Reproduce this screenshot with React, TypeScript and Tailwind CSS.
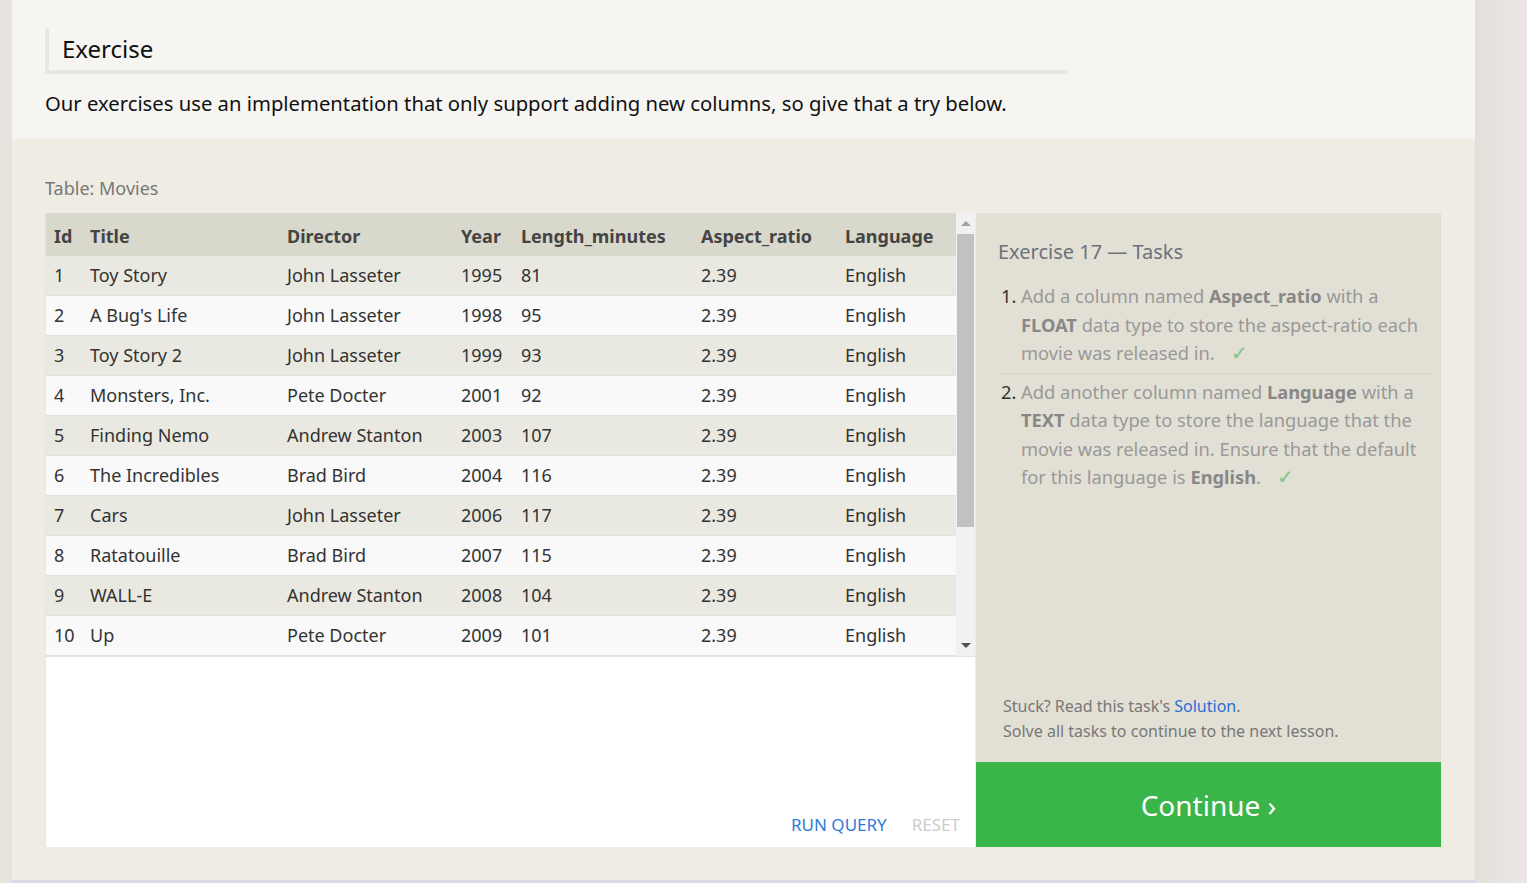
import React from "react"

const movies = [
  [1, "Toy Story", "John Lasseter", 1995, 81],
  [2, "A Bug's Life", "John Lasseter", 1998, 95],
  [3, "Toy Story 2", "John Lasseter", 1999, 93],
  [4, "Monsters, Inc.", "Pete Docter", 2001, 92],
  [5, "Finding Nemo", "Andrew Stanton", 2003, 107],
  [6, "The Incredibles", "Brad Bird", 2004, 116],
  [7, "Cars", "John Lasseter", 2006, 117],
  [8, "Ratatouille", "Brad Bird", 2007, 115],
  [9, "WALL-E", "Andrew Stanton", 2008, 104],
  [10, "Up", "Pete Docter", 2009, 101],
]

const cols = "grid grid-cols-[36px_197px_174px_60px_180px_144px_119px]"
const headers = ["Id", "Title", "Director", "Year", "Length_minutes", "Aspect_ratio", "Language"]

function Check() {
  return <span className="ml-4 text-[20px] text-[#7cc68a]">✓</span>
}

export default function App() {
  return (
    <div
      className="flex w-full h-[883px] bg-[#e6e2de] overflow-hidden"
      style={{ fontFamily: '"Noto Sans", "Open Sans", sans-serif' }}
    >
      <div className="w-[12px] shrink-0" />
      <div className="w-[1463px] shrink-0 flex flex-col">
        {/* lesson text */}
        <div className="h-[139px] bg-[#f6f5f1] px-[33px] pt-[28px]">
          <div className="w-[1022px] h-[46px] border-l-4 border-b-4 border-[#e8e8de] pl-[13px] flex items-center text-[24px] text-[#111]">
            Exercise
          </div>
          <p className="mt-[14px] text-[20.25px] text-[#111]">
            Our exercises use an implementation that only support adding new columns, so give that a try below.
          </p>
        </div>

        {/* exercise widget */}
        <div className="flex-1 bg-[#efece4] px-[33px] pt-[36px]">
          <div className="text-[18px] text-[#777] leading-[26px]">Table: Movies</div>
          <div className="mt-[12px] flex h-[634px]">
            <div className="w-[930px] flex flex-col bg-white border-l border-[#e6e4dc]">
              <div className="flex h-[444px] border-b border-[#e6e4dc]">
                <div className="w-[910px] text-[18px] text-[#333]">
                  <div className={`${cols} h-[43px] pt-[3px] items-center bg-[#d9d8cc] font-bold text-[#444]`}>
                    {headers.map((h) => (
                      <div key={h} className="pl-[8px]">{h}</div>
                    ))}
                  </div>
                  {movies.map((m, i) => (
                    <div
                      key={m[0]}
                      className={`${cols} h-[40px] items-center border-b border-[#e2e1da] ${
                        i % 2 === 0 ? "bg-[#eae9e1]" : "bg-[#f9f9f9]"
                      }`}
                    >
                      <div className="pl-[8px]">{m[0]}</div>
                      <div className="pl-[8px]">{m[1]}</div>
                      <div className="pl-[8px]">{m[2]}</div>
                      <div className="pl-[8px]">{m[3]}</div>
                      <div className="pl-[8px]">{m[4]}</div>
                      <div className="pl-[8px]">2.39</div>
                      <div className="pl-[8px]">English</div>
                    </div>
                  ))}
                </div>
                {/* scrollbar */}
                <div className="w-[20px] bg-[#f1f1f1] flex flex-col items-center">
                  <div className="h-[21px] flex items-center justify-center">
                    <div className="w-0 h-0 border-l-[5px] border-r-[5px] border-b-[5px] border-l-transparent border-r-transparent border-b-[#a3a3a3]" />
                  </div>
                  <div className="w-[17px] h-[293px] bg-[#c1c1c1]" />
                  <div className="flex-1" />
                  <div className="h-[22px] flex items-center justify-center">
                    <div className="w-0 h-0 border-l-[5px] border-r-[5px] border-t-[5px] border-l-transparent border-r-transparent border-t-[#505050]" />
                  </div>
                </div>
              </div>
              <div className="flex-1 flex items-end justify-end gap-[25px] pr-[15px] pb-[10px] text-[17px]">
                <span className="text-[#2f7ad9]">RUN QUERY</span>
                <span className="text-[#cccccc]">RESET</span>
              </div>
            </div>

            {/* tasks panel */}
            <div className="w-[465px] ml-[1px] flex flex-col">
              <div className="flex-1 bg-[#e2e0d4] pl-[22px] pr-[8px] pt-[25px] pb-[18px] flex flex-col">
                <div className="text-[20px] leading-[28px] text-[#6c717c]">Exercise 17 — Tasks</div>
                <ol className="mt-[16px] text-[18.3px] leading-[28.5px] text-[#999]">
                  <li className="flex pb-[5px] border-b border-[#d6d4c8]">
                    <span className="w-[23px] shrink-0 pl-[3px] text-[#333]">1.</span>
                    <span>
                      Add a column named <b className="text-[#888]">Aspect_ratio</b> with a <b className="text-[#888]">FLOAT</b> data type
                      to store the aspect-ratio each movie was released in.
                      <Check />
                    </span>
                  </li>
                  <li className="flex pt-[4px]">
                    <span className="w-[23px] shrink-0 pl-[3px] text-[#333]">2.</span>
                    <span>
                      Add another column named <b className="text-[#888]">Language</b> with a <b className="text-[#888]">TEXT</b> data type
                      to store the language that the movie was released in. Ensure that the default for this language is{" "}
                      <b className="text-[#888]">English</b>.
                      <Check />
                    </span>
                  </li>
                </ol>
                <div className="flex-1" />
                <div className="pl-[5px] text-[16px] leading-[25px] text-[#777]">
                  <div>
                    Stuck? Read this task's <span className="text-[#2a6ed8]">Solution</span>.
                  </div>
                  <div>Solve all tasks to continue to the next lesson.</div>
                </div>
              </div>
              <div className="h-[85px] bg-[#3ab54a] flex items-center justify-center text-white text-[28px]">
                Continue ›
              </div>
            </div>
          </div>
        </div>
        <div className="h-[3px] bg-[#ddd7e9]" />
      </div>
      <div className="flex-1 bg-gradient-to-r from-[#e3dfdb] to-[#ece7e4]" />
    </div>
  )
}
